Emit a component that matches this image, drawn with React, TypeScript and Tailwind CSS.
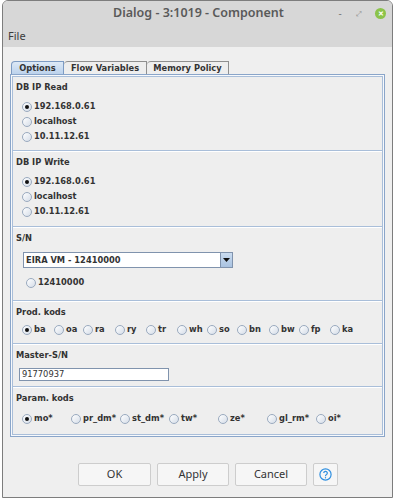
import { useState } from 'react';

const JAVA_FONT = "font-['DejaVu_Sans',sans-serif]";
const GTK_FONT = "font-['Noto_Sans',sans-serif]";

const PROD_KODS = [
  { label: 'ba', w: 'w-[32px]' },
  { label: 'oa', w: 'w-[29px]' },
  { label: 'ra', w: 'w-[32px]' },
  { label: 'ry', w: 'w-[31px]' },
  { label: 'tr', w: 'w-[31px]' },
  { label: 'wh', w: 'w-[30px]' },
  { label: 'so', w: 'w-[30px]' },
  { label: 'bn', w: 'w-[32px]' },
  { label: 'bw', w: 'w-[30px]' },
  { label: 'fp', w: 'w-[31px]' },
  { label: 'ka', w: 'w-[30px]' },
];

const PARAM_KODS = ['mo*', 'pr_dm*', 'st_dm*', 'tw*', 'ze*', 'gl_rm*', 'oi*'];
const IPS = ['192.168.0.61', 'localhost', '10.11.12.61'];

function Radio({ checked }: { checked?: boolean }) {
  return (
    <div className="w-[10px] h-[10px] rounded-full border border-[#9aaabf] bg-gradient-to-br from-white to-[#d5dde8] flex items-center justify-center flex-shrink-0">
      {checked && <div className="w-[4px] h-[4px] rounded-full bg-[#111]" />}
    </div>
  );
}

function RadioRow({ label, checked, onClick }: { label: string; checked?: boolean; onClick?: () => void }) {
  return (
    <div className="h-[15px] flex items-center gap-[2px] cursor-default" onClick={onClick}>
      <Radio checked={checked} />
      <span className="text-[8.3px] font-bold text-[#333] leading-none">{label}</span>
    </div>
  );
}

function SectionHeader({ children }: { children: string }) {
  return <div className="h-[13px] pl-[3px] flex items-center text-[8.3px] font-bold text-[#333] leading-none">{children}</div>;
}

export default function App() {
  const [readIp, setReadIp] = useState(0);
  const [writeIp, setWriteIp] = useState(0);
  const [prod, setProd] = useState(0);
  const [param, setParam] = useState(0);

  const sep = 'border-t border-[#a9bed9] shadow-[inset_0_1px_0_#ffffff]';

  return (
    <div className="w-[394px] h-[500px] bg-white overflow-hidden">
      <div className="ml-[2px] w-[391px] h-[498px] border border-[#7d7d7d] rounded-t-[6px] overflow-hidden flex flex-col bg-[#efefef]">
        {/* Title bar */}
        <div className={`h-[24px] bg-[#d7d7d7] relative flex items-center justify-center ${GTK_FONT}`}>
          <span className="text-[12.5px] font-semibold text-[#5a5a5a] pl-[2px]">Dialog - 3:1019 - Component</span>
          <div className="absolute right-[6px] top-0 h-full flex items-center">
            <span className="w-[8px] text-[10px] text-[#777] leading-none text-center">-</span>
            <span className="ml-[11px] w-[8px] text-[7px] text-[#888] leading-none text-center">⤢</span>
            <div className="ml-[12px] w-[11px] h-[11px] rounded-full bg-[#8bc34a] flex items-center justify-center">
              <span className="text-[7px] font-bold text-white leading-none">✕</span>
            </div>
          </div>
        </div>

        {/* Menu bar */}
        <div className={`h-[22px] bg-[#d7d7d7] px-[5px] flex items-center ${GTK_FONT}`}>
          <span className="text-[11px] text-[#3c3c3c]">File</span>
        </div>

        {/* Content */}
        <div className={`flex-1 flex flex-col pl-[7px] pt-[14px] ${JAVA_FONT}`}>
          {/* Tabs */}
          <div className="flex items-end h-[13px] pl-[1px]">
            <div className="w-[53px] h-[13px] rounded-tl-[4px] border border-b-0 border-[#7d9bc3] bg-gradient-to-b from-[#dde9f6] to-[#bcd2ec] flex items-center justify-center text-[8.3px] font-bold text-[#333]">
              Options
            </div>
            <div className="w-[83px] h-[13px] rounded-tl-[4px] border border-b-0 border-l-0 border-[#8f8f8f] bg-[#eeeeee] flex items-center justify-center text-[8.3px] font-bold text-[#333]">
              Flow Variables
            </div>
            <div className="w-[82px] h-[13px] rounded-tl-[4px] border border-b-0 border-l-0 border-[#8f8f8f] bg-[#eeeeee] flex items-center justify-center text-[8.3px] font-bold text-[#333]">
              Memory Policy
            </div>
          </div>

          {/* Tab panel */}
          <div className="w-[375px] border border-[#8aa5c9] p-[1px] bg-[#f7f9fc]">
            <div className="border border-[#a9bed9] bg-[#eeeeee] flex flex-col">
              {/* DB IP Read */}
              <div className="h-[73px] pt-[4px]">
                <SectionHeader>DB IP Read</SectionHeader>
                <div className="mt-[5px] pl-[9px] flex flex-col">
                  {IPS.map((ip, i) => (
                    <RadioRow key={ip} label={ip} checked={readIp === i} onClick={() => setReadIp(i)} />
                  ))}
                </div>
              </div>

              {/* DB IP Write */}
              <div className={`h-[76px] pt-[5px] ${sep}`}>
                <SectionHeader>DB IP Write</SectionHeader>
                <div className="mt-[5px] pl-[9px] flex flex-col">
                  {IPS.map((ip, i) => (
                    <RadioRow key={ip} label={ip} checked={writeIp === i} onClick={() => setWriteIp(i)} />
                  ))}
                </div>
              </div>

              {/* S/N */}
              <div className={`h-[74px] pt-[5px] ${sep}`}>
                <SectionHeader>S/N</SectionHeader>
                <div className="mt-[7px] ml-[10px] w-[210px] h-[16px] flex border border-[#8093ad] bg-white">
                  <div className="flex-1 flex items-center pl-[2px] text-[8.3px] font-bold text-[#333]">EIRA VM - 12410000</div>
                  <div className="w-[12px] h-full border-l border-[#8093ad] bg-gradient-to-b from-[#cadcf0] to-[#a9c2e0] flex items-center justify-center">
                    <svg width="7" height="4" viewBox="0 0 7 4">
                      <path d="M0 0h7L3.5 4z" fill="#111" />
                    </svg>
                  </div>
                </div>
                <div className="mt-[7px] pl-[13px]">
                  <RadioRow label="12410000" />
                </div>
              </div>

              {/* Prod. kods */}
              <div className={`h-[43px] pt-[5px] ${sep}`}>
                <SectionHeader>Prod. kods</SectionHeader>
                <div className="mt-[3px] pl-[9px] flex">
                  {PROD_KODS.map((k, i) => (
                    <div key={k.label} className={`${k.w} flex-shrink-0`}>
                      <RadioRow label={k.label} checked={prod === i} onClick={() => setProd(i)} />
                    </div>
                  ))}
                </div>
              </div>

              {/* Master-S/N */}
              <div className={`h-[43px] pt-[5px] ${sep}`}>
                <SectionHeader>Master-S/N</SectionHeader>
                <div className="mt-[6px] ml-[6px] w-[150px] h-[13px] border border-[#8093ad] bg-white flex items-center pl-[2px] text-[8.3px] text-[#333]">
                  91770937
                </div>
              </div>

              {/* Param. kods */}
              <div className={`h-[48px] pt-[5px] ${sep}`}>
                <SectionHeader>Param. kods</SectionHeader>
                <div className="mt-[6px] pl-[9px] grid grid-cols-[repeat(7,49px)]">
                  {PARAM_KODS.map((k, i) => (
                    <RadioRow key={k} label={k} checked={param === i} onClick={() => setParam(i)} />
                  ))}
                </div>
              </div>
            </div>
          </div>

          {/* Buttons */}
          <div className={`mt-[26px] pl-[68px] flex gap-[6px] ${GTK_FONT}`}>
            <button className="w-[73px] h-[23px] border border-[#cdcdcd] rounded-[2px] bg-[#f6f6f6] text-[11px] text-[#333]">OK</button>
            <button className="w-[72px] h-[23px] border border-[#cdcdcd] rounded-[2px] bg-[#f6f6f6] text-[11px] text-[#333]">Apply</button>
            <button className="w-[72px] h-[23px] border border-[#cdcdcd] rounded-[2px] bg-[#f6f6f6] text-[11px] text-[#333]">Cancel</button>
            <button className="w-[25px] h-[23px] border border-[#cdcdcd] rounded-[2px] bg-[#f6f6f6] flex items-center justify-center">
              <svg width="13" height="13" viewBox="0 0 13 13">
                <circle cx="6.5" cy="6.5" r="5.6" fill="none" stroke="#2f8fe0" strokeWidth="1.2" />
                <path d="M4.7 5.1a1.8 1.8 0 1 1 2.6 1.6c-.6.3-.8.6-.8 1.2v.4" fill="none" stroke="#2f8fe0" strokeWidth="1.2" />
                <circle cx="6.5" cy="9.7" r="0.7" fill="#2f8fe0" />
              </svg>
            </button>
          </div>
        </div>
      </div>
    </div>
  );
}
